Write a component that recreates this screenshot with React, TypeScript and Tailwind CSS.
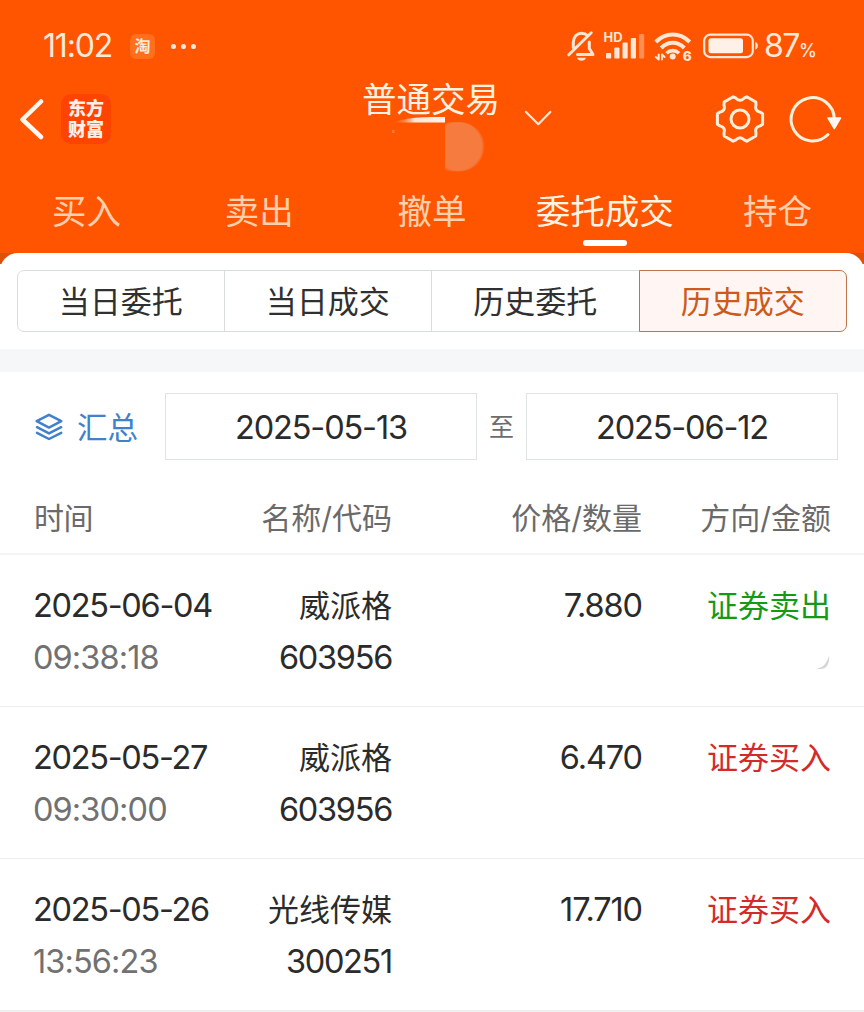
import React, { useState } from 'react';
import { clsx } from 'clsx';

type Trade = {
  date: string;
  time: string;
  name: string;
  code: string;
  price: string;
  side: 'buy' | 'sell';
};

const tabs = ['买入', '卖出', '撤单', '委托成交', '持仓'];
const filters = ['当日委托', '当日成交', '历史委托', '历史成交'];

const trades: Trade[] = [
  { date: '2025-06-04', time: '09:38:18', name: '威派格', code: '603956', price: '7.880', side: 'sell' },
  { date: '2025-05-27', time: '09:30:00', name: '威派格', code: '603956', price: '6.470', side: 'buy' },
  { date: '2025-05-26', time: '13:56:23', name: '光线传媒', code: '300251', price: '17.710', side: 'buy' },
];

// Six-lobed gear outline around 0,0
const gearPath = () => {
  const point = (deg: number, r: number) => {
    const rad = (deg * Math.PI) / 180;
    return `${(r * Math.cos(rad)).toFixed(2)} ${(r * Math.sin(rad)).toFixed(2)}`;
  };
  const lobes = [0, 60, 120, 180, 240, 300].map(
    (a) => `L${point(a - 13, 23.2)} L${point(a + 13, 23.2)} L${point(a + 19, 21.2)} Q${point(a + 30, 16.6)} ${point(a + 41, 21.2)}`
  );
  return `M${point(-19, 21.2)} ${lobes.join(' ')} Z`;
};

const StatusIcons = () => (
  <svg width="200" height="36" viewBox="560 28 200 36" fill="none" stroke="#ffe6d5" strokeLinecap="round" strokeLinejoin="round">
    {/* Muted bell */}
    <path d="M573.300 47.500V42.500C573.300 37 577 33.200 581.500 33.200C584 33.200 586 34 587.500 35.500M589.300 42V48.500L593 54.500H577.500" strokeWidth="3" />
    <path d="M568.800 54.800L591.200 32.800" strokeWidth="3" />
    <path d="M577 57.800H586C585 61.800 578 61.800 577 57.800Z" fill="#ffe6d5" stroke="none" />

    {/* Signal */}
    <text x="603.500" y="42.300" fontSize="12.500" fontWeight="700" fill="#ffe6d5" stroke="none" fontFamily="Inter, sans-serif" textLength="19" lengthAdjust="spacingAndGlyphs">HD</text>
    <g fill="#ffe6d5" stroke="none">
      <rect x="606" y="53" width="5.200" height="5.500" rx="1" />
      <rect x="614.300" y="47.500" width="5.200" height="11" rx="1" />
      <rect x="622.500" y="42.500" width="5.200" height="16" rx="1" />
      <rect x="630.800" y="38" width="5.200" height="20.500" rx="1" />
      <rect x="639" y="34" width="5.200" height="24.500" rx="1" opacity="0.400" />
    </g>

    {/* Wi-Fi */}
    <path d="M655.800 42C665.500 32 680 32 689.700 42" strokeWidth="4" strokeLinecap="butt" />
    <path d="M661.200 48C668 41 677.500 41 684.300 48" strokeWidth="4" strokeLinecap="butt" />
    <path d="M666.500 53.200C670 49.800 675.500 49.800 679 53.200" strokeWidth="3.600" strokeLinecap="butt" />
    <circle cx="672.700" cy="56.500" r="3" fill="#ffe6d5" stroke="none" />
    <path d="M658.700 54.500V59.500L655.800 57M662 59.500V54.500L664.500 57" strokeWidth="2" />
    <text x="682.800" y="60.500" fontSize="13.500" fontWeight="800" fill="#ffe6d5" stroke="none" fontFamily="Inter, sans-serif">6</text>

    {/* Battery */}
    <rect x="704.200" y="34.700" width="48.600" height="22.400" rx="6" strokeWidth="2.200" />
    <rect x="708.500" y="38.300" width="34.500" height="15" rx="2.500" fill="#fff0e8" stroke="none" />
    <path d="M756 42.500C758 43.500 758 48 756 49Z" fill="#ffe6d5" strokeWidth="0.800" />
  </svg>
);

const StatusBar = () => (
  <div className="flex h-[78px] items-center pt-[14px] text-[#ffe9da]">
    <span className="ml-[43px] w-[87px] text-[32px] leading-none tracking-[-1.200px]">11:02</span>
    <span className="flex size-[25px] items-center justify-center rounded-[6px] bg-[#ff6f1c] text-[16px] font-bold leading-none">淘</span>
    <span className="ml-4 flex gap-[5px]">
      <i className="size-[5px] rounded-full bg-[#ffe9da]" />
      <i className="size-[5px] rounded-full bg-[#ffe9da]" />
      <i className="size-[5px] rounded-full bg-[#ffe9da]" />
    </span>
    <span className="ml-auto"><StatusIcons /></span>
    <span className="ml-1 flex w-[100px] items-baseline leading-none">
      <span className="text-[32px] tracking-[-1.500px]">87</span>
      <span className="text-[18px] font-medium">%</span>
    </span>
  </div>
);

const TitleBar = () => (
  <div className="flex h-[98px] items-start">
    <svg className="ml-4 mt-5" width="30" height="42" viewBox="0 0 30 42" fill="none" stroke="#fff7f0" strokeWidth="4.500" strokeLinecap="round" strokeLinejoin="round">
      <path d="M25 3.500L6.500 21.500L25 39" />
    </svg>
    <div className="ml-[15px] mt-4 flex h-[50px] w-[50px] flex-col items-center justify-center rounded-[10px] bg-[#ff4300] text-[18px] font-black leading-[21px] text-[#fff0e6]">
      <span>东方</span>
      <span>财富</span>
    </div>
    <div className="ml-[251px] w-[140px]">
      <div className="text-[34.500px] leading-[44px] text-[#fff2e0]">普通交易</div>
      {/* Leftover of the masked account name */}
      <svg className="-mt-[7px] ml-[30px] block" width="96" height="57" viewBox="392 115 96 57">
        <defs>
          <linearGradient id="glow" x1="0" x2="1">
            <stop offset="0" stopColor="#ff8a48" stopOpacity="0" />
            <stop offset="0.400" stopColor="#ffe4d2" />
            <stop offset="1" stopColor="#fff3ea" />
          </linearGradient>
          <radialGradient id="orb" gradientUnits="userSpaceOnUse" cx="458" cy="146.500" r="27">
            <stop offset="0.880" stopColor="#f57b3e" />
            <stop offset="1" stopColor="#f57b3e" stopOpacity="0" />
          </radialGradient>
        </defs>
        <path d="M394 122.500C403 118 418 117 445 117V122.500Z" fill="url(#glow)" />
        <rect x="392" y="130" width="2.500" height="3" fill="#ff7a33" />
        <path d="M445 122H460A24.700 24.700 0 0 1 460 171.500H445Z" fill="url(#orb)" />
      </svg>
    </div>
    <svg className="ml-[22px] mt-[31px]" width="28" height="18" viewBox="524 109 28 18" fill="none" stroke="#ffe9d2" strokeWidth="2.200" strokeLinecap="round" strokeLinejoin="round">
      <path d="M526 112L538.300 124.200L550.300 112" />
    </svg>
    <svg className="ml-auto mt-[15px]" width="52" height="52" viewBox="-26 -26 52 52" fill="none" stroke="#fff0dc" strokeWidth="3" strokeLinejoin="round">
      <path d={gearPath()} />
      <circle r="9" />
    </svg>
    <svg className="ml-5 mr-[22px] mt-[15px]" width="56" height="52" viewBox="786.500 93 56 52" fill="none" stroke="#fff0dc" strokeWidth="3" strokeLinecap="round">
      <path d="M828.500 134.500A21.600 21.600 0 1 1 834.800 119" />
      <path d="M828.500 118H841L834.800 128.500Z" fill="#fff7f0" stroke="#fff7f0" strokeWidth="1.500" strokeLinejoin="round" />
    </svg>
  </div>
);

const App = () => {
  const [tab, setTab] = useState(3);
  const [filter, setFilter] = useState(3);

  return (
    <div className="h-[1012px] w-[864px] overflow-hidden bg-white font-['Inter','Noto_Sans_CJK_SC',sans-serif] text-[#2b2b2b]">
      <header className="h-[253px] bg-[#ff5500]">
        <StatusBar />
        <TitleBar />
        <nav className="grid grid-cols-5">
          {tabs.map((label, i) => (
            <button
              key={label}
              onClick={() => setTab(i)}
              className={clsx(
                'flex flex-col items-center whitespace-nowrap text-[34.500px] leading-[64px]',
                i === tab ? 'text-[#fff4e4]' : 'text-[#ffcfae]'
              )}
            >
              {/* Text sits slightly lower than its line box */}
              <span className="h-16 pt-1">{label}</span>
              {i === tab && <span className="h-1.5 w-11 rounded-full bg-white" />}
            </button>
          ))}
        </nav>
      </header>

      {/* Order type filter */}
      <div className="bg-[linear-gradient(#df5006_11px,#fff_11px)]">
        <div className="h-24 rounded-t-[18px] bg-white px-[17px] pt-[17px]">
          <div className="grid h-[62px] grid-cols-4">
            {filters.map((label, i) => (
              <button
                key={label}
                onClick={() => setFilter(i)}
                className={clsx(
                  'border text-[31px] leading-[59px] first:rounded-l-[7px] last:rounded-r-[7px]',
                  i > 0 && '-ml-px',
                  i === filter ? 'border-[#c07348] bg-[#fff5f2] text-[#cc5a1c]' : 'border-[#d9dddd] text-[#303030]'
                )}
              >
                {label}
              </button>
            ))}
          </div>
        </div>
      </div>

      <div className="h-[23px] bg-[#f6f7f9]" />

      {/* Date range */}
      <div className="flex h-[109px] items-center pl-[34px]">
        <div className="flex w-[131px] items-center gap-[13px] text-[30.500px] leading-none text-[#4181cb]">
          <svg width="30" height="30" viewBox="34 412 30 30" fill="none" stroke="#4181cb" strokeWidth="2.500" strokeLinejoin="round" strokeLinecap="round">
            <path d="M49 414.800L61.300 421.200L49 427.600L36.700 421.200Z" />
            <path d="M37 427.200L49 433.400L61.200 427.200" />
            <path d="M37 432.800L49 439L61.200 432.800" />
          </svg>
          <span className="pt-[3px]">汇总</span>
        </div>
        <div className="h-[67px] w-[312px] border border-[#e0e3e4] text-center text-[32.500px] leading-[68px] tracking-[-1.150px]">2025-05-13</div>
        <span className="w-[49px] pt-0.5 text-center text-[25px] leading-none text-[#6c6c6c]">至</span>
        <div className="h-[67px] w-[312px] border border-[#e0e3e4] text-center text-[32.500px] leading-[68px] tracking-[-1.150px]">2025-06-12</div>
      </div>

      {/* Table header */}
      <div className="grid h-[74px] grid-cols-[190px_168px_250px_189px] border-b-2 border-[#f4f6f6] pl-[34px] text-right text-[30px] leading-[75px] text-[#6a6a6a]">
        <span className="text-left tracking-[-0.500px]">时间</span>
        <span>名称/代码</span>
        <span>价格/数量</span>
        <span>方向/金额</span>
      </div>

      {trades.map((trade) => (
        <div
          key={trade.date}
          className="grid h-[152px] grid-cols-[190px_168px_250px_189px] border-b border-[#eeeeee] pl-[34px] pt-[25px] text-right text-[32.500px] leading-[52px] tracking-[-1.300px] last:h-[153px] last:border-b-2"
        >
          <div className="-ml-px">
            <p className="text-left">{trade.date}</p>
            <p className="text-left tracking-[-0.900px] text-[#717171]">{trade.time}</p>
          </div>
          <div>
            <p className="text-[31px] tracking-normal">{trade.name}</p>
            <p>{trade.code}</p>
          </div>
          <p className="tracking-[-1.100px]">{trade.price}</p>
          <div>
            <p className={clsx('text-[31px] tracking-normal', trade.side === 'sell' ? 'text-[#159a15]' : 'text-[#d42a2a]')}>
              {trade.side === 'sell' ? '证券卖出' : '证券买入'}
            </p>
            {trade.side === 'sell' && (
              <svg className="ml-auto mt-[22px]" width="16" height="18" viewBox="0 0 16 18">
                <path d="M14 1.500C15 10 11 17 2 14.500C8 14 12 9 14 1.500Z" fill="#d5d5d5" />
              </svg>
            )}
          </div>
        </div>
      ))}
    </div>
  );
};

export default App;
